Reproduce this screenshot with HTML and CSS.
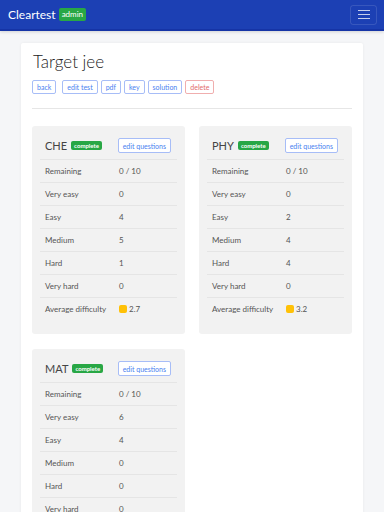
FILE: index.html
```html
<!DOCTYPE html>
<html lang="en">
<head>
    <meta charset="UTF-8">
    <meta name="viewport" content="width=device-width, initial-scale=1.0">
    <title>Cleartest - Target jee</title>
    <link rel="stylesheet" href="styles.css">
</head>
<body>

    <nav class="navbar">
        <div class="brand">Cleartest <span class="badge">admin</span></div>
        <button class="toggler">
            <span></span><span></span><span></span>
        </button>
    </nav>

    <div class="container">
        <h1>Target jee</h1>
        <div class="actions">
            <button class="btn back-btn">back</button>
            <button class="btn">edit test</button>
            <button class="btn">pdf</button>
            <button class="btn">key</button>
            <button class="btn">solution</button>
            <button class="btn btn-delete">delete</button>
        </div>

        <hr>

        <div class="subjects">
            <div class="subject">
                <div class="subject-head">
                    <div class="subject-name">CHE <span class="badge small">complete</span></div>
                    <button class="btn btn-edit">edit questions</button>
                </div>
                <div class="row"><span>Remaining</span><span>0 / 10</span></div>
                <div class="row"><span>Very easy</span><span>0</span></div>
                <div class="row"><span>Easy</span><span>4</span></div>
                <div class="row"><span>Medium</span><span>5</span></div>
                <div class="row"><span>Hard</span><span>1</span></div>
                <div class="row"><span>Very hard</span><span>0</span></div>
                <div class="row"><span>Average difficulty</span><span><i class="dot"></i>2.7</span></div>
            </div>

            <div class="subject">
                <div class="subject-head">
                    <div class="subject-name">PHY <span class="badge small">complete</span></div>
                    <button class="btn btn-edit">edit questions</button>
                </div>
                <div class="row"><span>Remaining</span><span>0 / 10</span></div>
                <div class="row"><span>Very easy</span><span>0</span></div>
                <div class="row"><span>Easy</span><span>2</span></div>
                <div class="row"><span>Medium</span><span>4</span></div>
                <div class="row"><span>Hard</span><span>4</span></div>
                <div class="row"><span>Very hard</span><span>0</span></div>
                <div class="row"><span>Average difficulty</span><span><i class="dot"></i>3.2</span></div>
            </div>

            <div class="subject">
                <div class="subject-head">
                    <div class="subject-name">MAT <span class="badge small">complete</span></div>
                    <button class="btn btn-edit">edit questions</button>
                </div>
                <div class="row"><span>Remaining</span><span>0 / 10</span></div>
                <div class="row"><span>Very easy</span><span>6</span></div>
                <div class="row"><span>Easy</span><span>4</span></div>
                <div class="row"><span>Medium</span><span>0</span></div>
                <div class="row"><span>Hard</span><span>0</span></div>
                <div class="row"><span>Very hard</span><span>0</span></div>
                <div class="row"><span>Average difficulty</span><span><i class="dot"></i>1.7</span></div>
            </div>
        </div>
    </div>

</body>
</html>
```

FILE: styles.css
```css
body {
    font-family: Lato, "Noto Sans", sans-serif;
    background: #f5f6f8;
    margin: 0;
    color: #333;
}

.navbar {
    height: 29px;
    background: #1c40b4;
    border-bottom: 2px solid #1534a6;
    box-shadow: 0px 1px 3px rgba(0, 0, 0, 0.15);
    display: flex;
    align-items: center;
    justify-content: space-between;
    padding: 0 7px 0 8px;
}

.brand {
    color: #ffffff;
    font-size: 12px;
    display: flex;
    align-items: center;
    gap: 3px;
}

.badge {
    background: #28a745;
    color: #ffffff;
    font-size: 8px;
    padding: 2px 3px;
    border-radius: 2px;
    line-height: 9px;
}

.badge.small {
    font-size: 6px;
    padding: 1px 3px;
    line-height: 7px;
    font-weight: bold;
}

.toggler {
    width: 27px;
    height: 20px;
    background: transparent;
    border: 1px solid rgba(255, 255, 255, 0.12);
    border-radius: 3px;
    display: flex;
    flex-direction: column;
    justify-content: center;
    align-items: center;
    gap: 3px;
    padding: 0;
}

.toggler span {
    width: 12px;
    height: 1px;
    background: rgba(255, 255, 255, 0.75);
}

.container {
    background: #ffffff;
    margin: 12px 21px 0 21px;
    padding: 8px 11px 0 11px;
    border-radius: 2px;
    box-shadow: 0px 0px 3px rgba(0, 0, 0, 0.06);
}

h1 {
    font-size: 17px;
    font-weight: 300;
    margin: 0 0 8px 1px;
    color: #222;
}

.actions {
    display: flex;
    gap: 3px;
}

.btn {
    font-family: inherit;
    font-size: 7px;
    background: #ffffff;
    color: #4a7ff0;
    border: 1px solid #a7bdf7;
    border-radius: 2px;
    padding: 0 4px;
    height: 14px;
    line-height: 12px;
    cursor: pointer;
}

.back-btn {
    margin-right: 3px;
}

.btn-delete {
    color: #e26a6a;
    border-color: #f0aeae;
}

hr {
    border: none;
    border-top: 1px solid #e6e6e6;
    margin: 14px 0 17px 0;
}

.subjects {
    display: grid;
    grid-template-columns: 153px 153px;
    column-gap: 14px;
    row-gap: 15px;
}

.subject {
    background: #f2f2f2;
    border-radius: 3px;
    padding: 0 8px 14px 8px;
}

.subject-head {
    display: flex;
    align-items: center;
    justify-content: space-between;
    height: 33px;
    box-sizing: border-box;
    padding: 6px 6px 0 5px;
}

.subject-name {
    font-size: 11px;
    display: flex;
    align-items: center;
    gap: 4px;
    color: #444;
}

.btn-edit {
    height: 15px;
    padding: 0 4px;
}

.row {
    display: grid;
    grid-template-columns: 74px 1fr;
    align-items: center;
    height: 22px;
    border-top: 1px solid #e5e5e5;
    padding: 0 5px;
    font-size: 8px;
    color: #555;
}

.row span {
    display: flex;
    align-items: center;
}

.dot {
    width: 8px;
    height: 8px;
    background: #ffc107;
    border-radius: 2px;
    margin-right: 2px;
}
```
